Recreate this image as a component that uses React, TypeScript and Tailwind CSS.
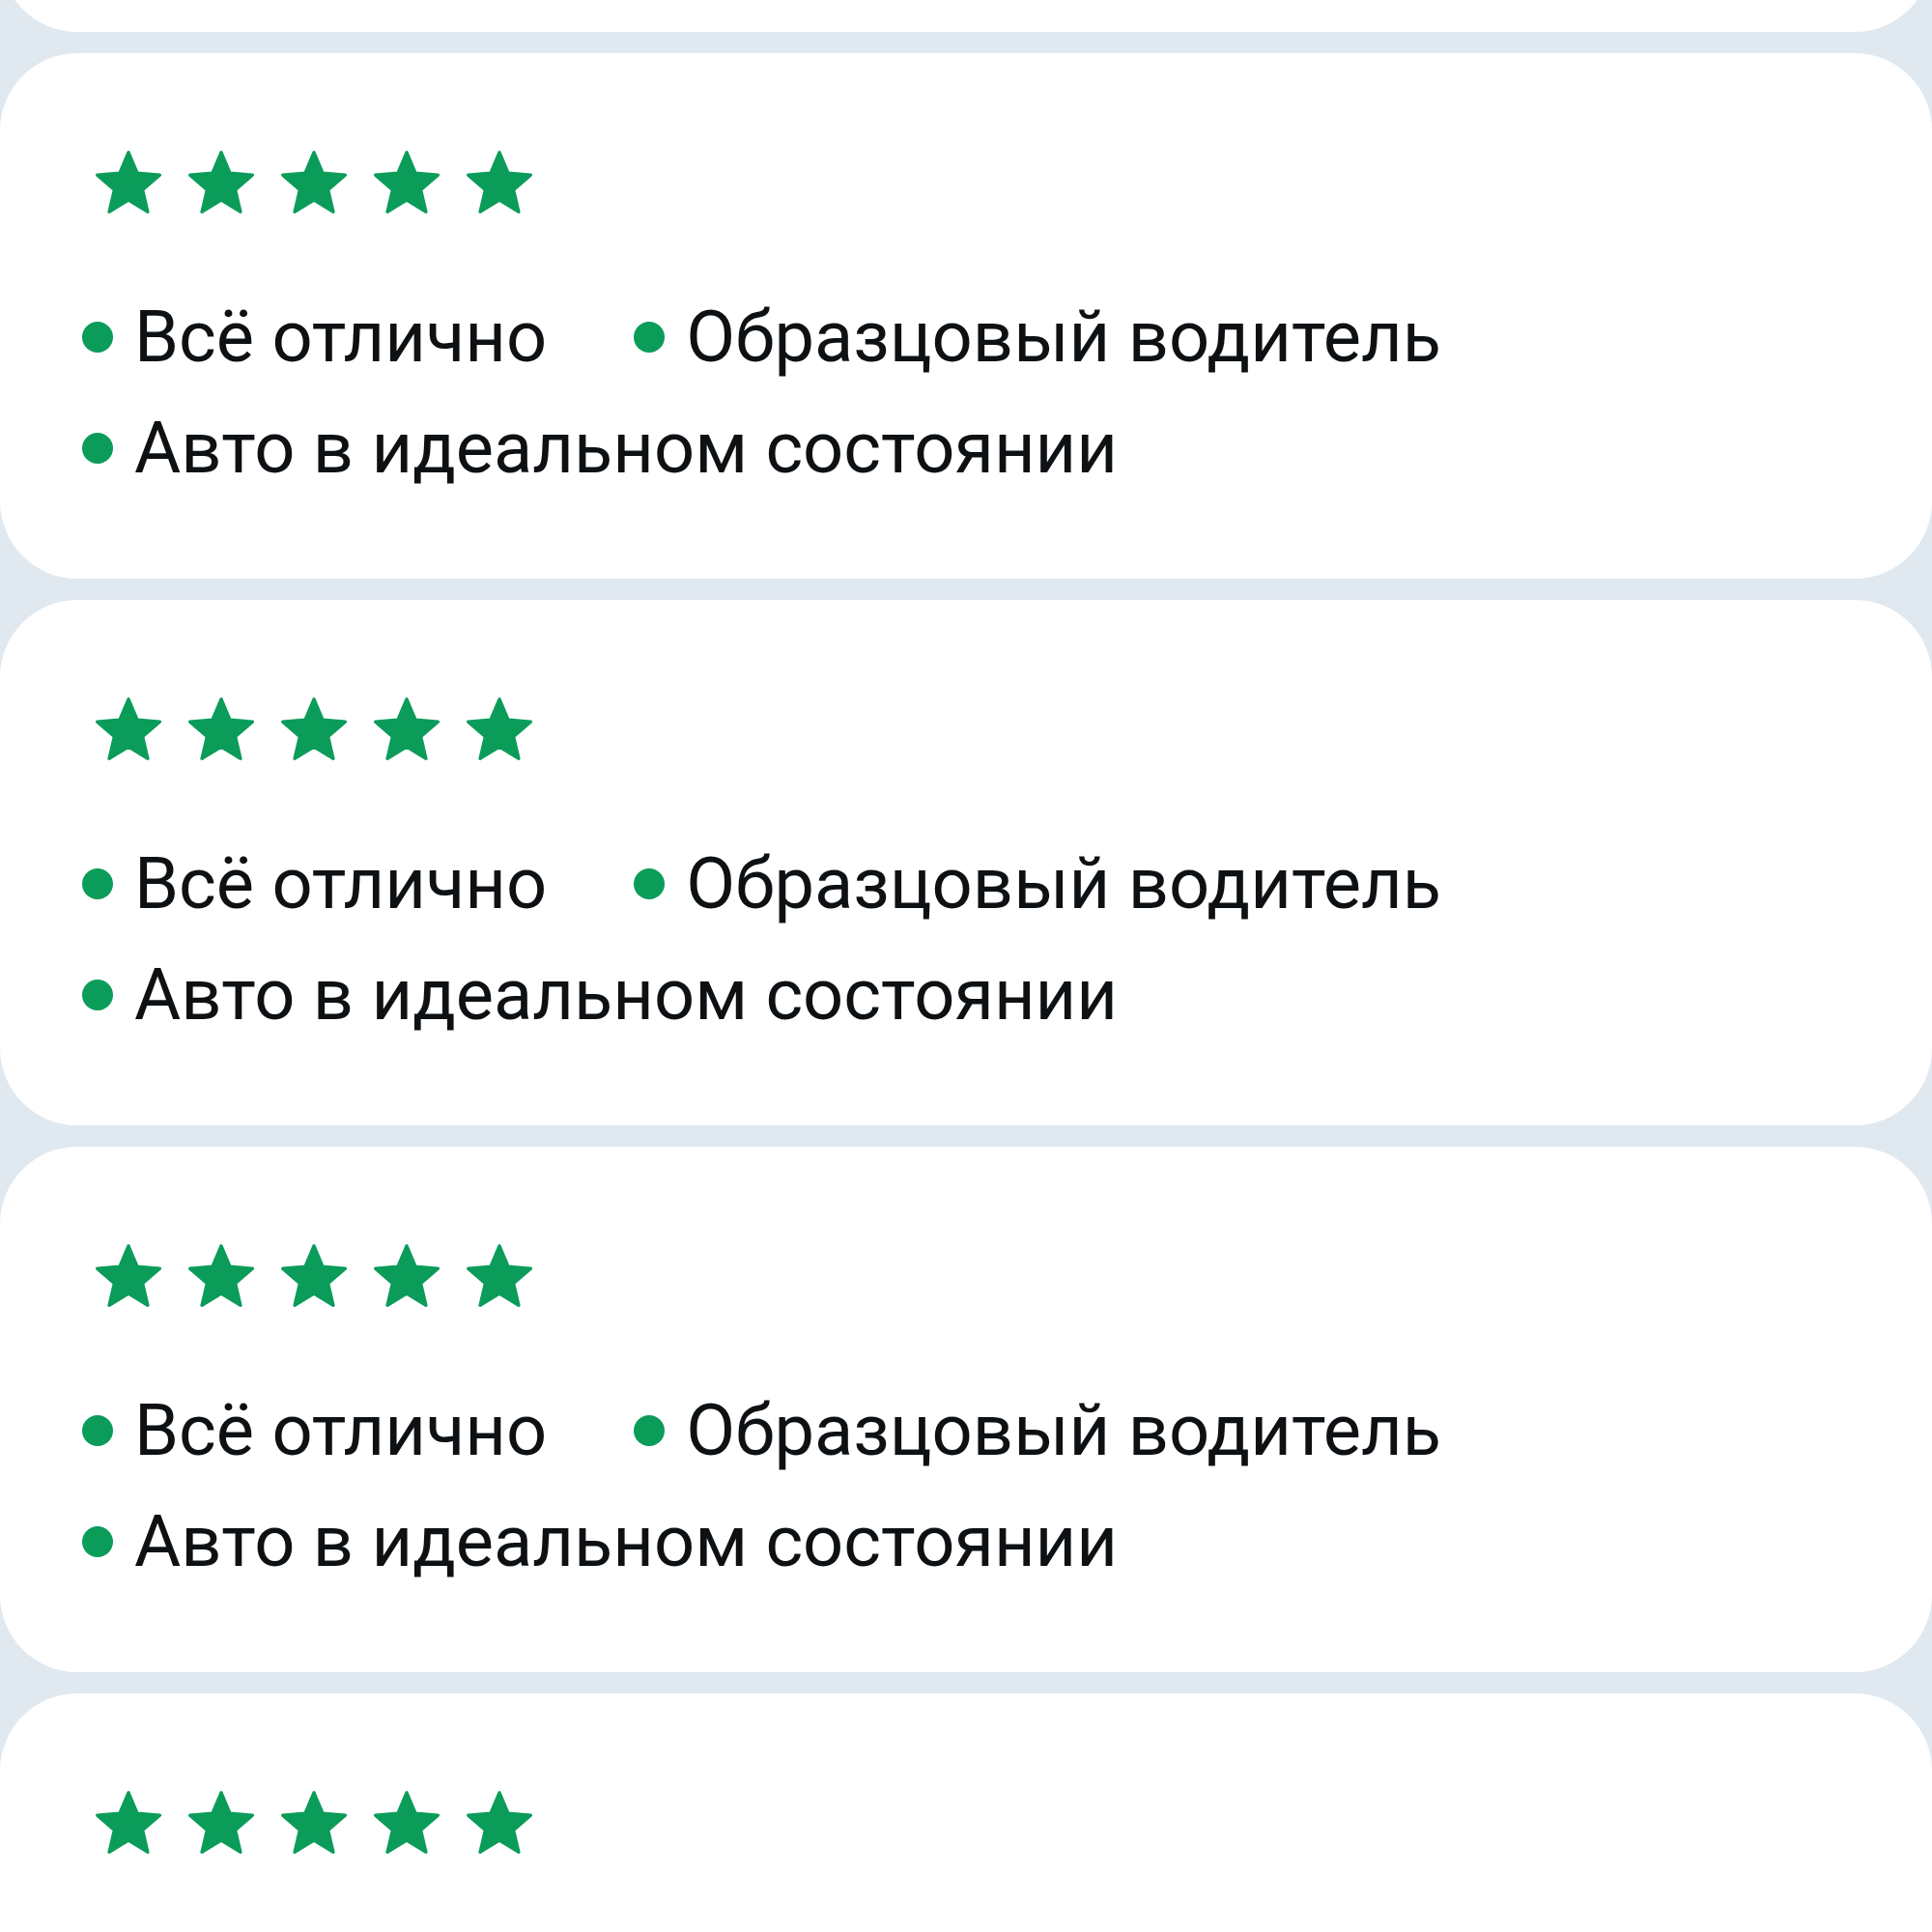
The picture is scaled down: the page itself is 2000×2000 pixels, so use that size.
import React from "react";

const tags = ["Всё отлично", "Образцовый водитель", "Авто в идеальном состоянии"];

const Star = () => (
  <svg viewBox="1.5 1.5 21 20" width="68" height="65" className="shrink-0">
    <path
      d="M12 17.27L18.18 21l-1.64-7.03L22 9.24l-7.19-.61L12 2 9.19 8.63 2 9.24l5.46 4.73L5.82 21z"
      fill="#0b9c5a"
      stroke="#0b9c5a"
      strokeWidth="1"
      strokeLinejoin="round"
    />
  </svg>
);

const ReviewCard = () => (
  <div className="bg-white rounded-[80px] px-[85px] pt-[100px] pb-[78px]">
    <div className="flex items-center gap-[28px] ml-[14px] h-[66px]">
      {[0, 1, 2, 3, 4].map((i) => (
        <Star key={i} />
      ))}
    </div>
    <ul className="mt-[70px] flex flex-wrap gap-x-[90px]">
      {tags.map((tag) => (
        <li key={tag} className="flex items-center gap-[22px] h-[115px]">
          <span className="w-[32px] h-[32px] rounded-full bg-[#0b9c5a] shrink-0" />
          <span className="text-[74px] leading-[115px] text-[#0e1114] whitespace-nowrap">{tag}</span>
        </li>
      ))}
    </ul>
  </div>
);

export default function App() {
  return (
    <div
      className="w-[2000px] h-[2000px] overflow-hidden bg-[#e0e8f0]"
      style={{ fontFamily: "Roboto, 'Noto Sans', sans-serif" }}
    >
      {/* list scrolled so that only the tail of the first review shows */}
      <div className="flex flex-col gap-[22px] -mt-[511px]">
        {[0, 1, 2, 3, 4].map((i) => (
          <ReviewCard key={i} />
        ))}
      </div>
    </div>
  );
}
